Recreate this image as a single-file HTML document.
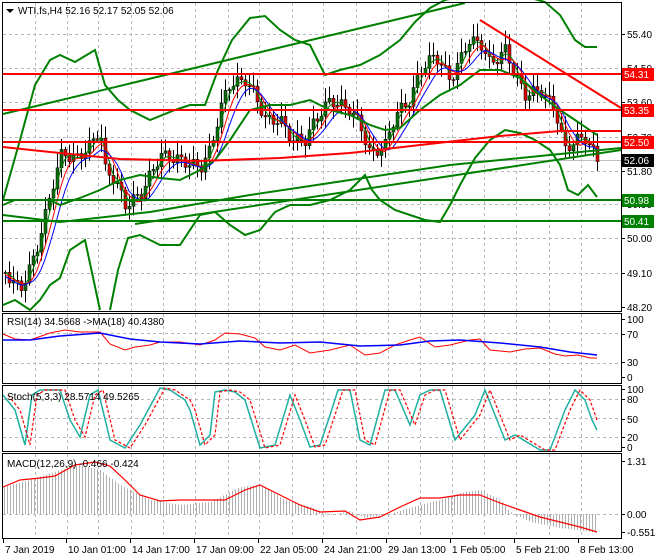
<!DOCTYPE html>
<html><head><meta charset="utf-8"><style>
body{margin:0;background:#fff;width:660px;height:560px;overflow:hidden}
svg{display:block;font-family:"Liberation Sans",sans-serif}
</style></head><body>
<svg id="s" width="660" height="560" xmlns="http://www.w3.org/2000/svg">
<rect width="660" height="560" fill="#fff"/>
<g id="grid" stroke="#b8b8b8" stroke-dasharray="3,3" stroke-width="1"></g>
<g id="hl"></g>
<g id="cd"></g>
<g id="ln" fill="none"></g>
<g stroke="#000" fill="none" stroke-width="1">
<rect x="2.5" y="2.5" width="619" height="309"/>
<rect x="2.5" y="313.5" width="619" height="70"/>
<rect x="2.5" y="385.5" width="619" height="66"/>
<rect x="2.5" y="453.5" width="619" height="85"/>
</g>
<g id="ax" font-size="10" fill="#000"></g>
<g font-size="10" fill="#000">
<path d="M6 9 L14 9 L10 13Z" fill="#000"/>
<text x="18" y="14">WTI.fs,H4  52.16 52.17 52.05 52.06</text>
<text x="7" y="325">RSI(14) 34.5668  -&gt;MA(18) 40.4380</text>
<text x="7" y="400">Stoch(5,3,3) 28.5714 49.5265</text>
<text x="7" y="467">MACD(12,26,9) -0.466 -0.424</text>
</g>
</svg>
<script>
var NS="http://www.w3.org/2000/svg";
function el(p,t,a,txt){var e=document.createElementNS(NS,t);for(var k in a)e.setAttribute(k,a[k]);if(txt!=null)e.textContent=txt;document.getElementById(p).appendChild(e);return e;}
function interp(pts,x){for(var i=0;i<pts.length-1;i++){if(x>=pts[i][0]&&x<=pts[i+1][0]){var t=(x-pts[i][0])/(pts[i+1][0]-pts[i][0]);return pts[i][1]+t*(pts[i+1][1]-pts[i][1]);}}return x<pts[0][0]?pts[0][1]:pts[pts.length-1][1];}
function pl(p,pts,c,w,extra){var a={points:pts.map(function(q){return q.join(",")}).join(" "),stroke:c,"stroke-width":w,fill:"none"};for(var k in extra)a[k]=extra[k];el(p,"polyline",a);}
var vx=[35,67,98,131,163,195,228,259,292,323,356,388,420,452,484,516,549,581];
vx.forEach(function(x){[[3,311],[314,383],[386,451],[454,538]].forEach(function(r){el("grid","line",{x1:x+.5,x2:x+.5,y1:r[0],y2:r[1]});});});
[34,68,102,137,171,204,238,273].forEach(function(y){el("grid","line",{x1:3,x2:621,y1:y+.5,y2:y+.5});});
[333,363].forEach(function(y){el("grid","line",{x1:3,x2:621,y1:y+.5,y2:y+.5});});
[399,418,437].forEach(function(y){el("grid","line",{x1:3,x2:621,y1:y+.5,y2:y+.5});});
el("grid","line",{x1:3,x2:621,y1:514.5,y2:514.5});
el("hl","line",{x1:3,x2:621,y1:160.5,y2:160.5,stroke:"#c0c0c0","stroke-dasharray":"none"});
var P=[[3,270],[20,290],[35,255],[45,215],[55,175],[62,152],[75,160],[90,145],[100,130],[105,170],[115,180],[125,205],[140,195],[150,175],[160,155],[180,160],[200,168],[210,150],[220,110],[228,85],[245,80],[255,95],[265,120],[280,120],[292,140],[305,140],[315,120],[330,100],[350,110],[360,125],[370,155],[385,145],[395,115],[410,100],[420,70],[435,55],[450,80],[460,60],[468,40],[482,45],[490,65],[505,50],[515,75],[525,95],[540,90],[555,110],[565,150],[575,140],[585,138],[592,150],[597,160]];
var closes=[];
for(var x=5,i=0;x<=597;x+=4,i++){var c=interp(P,x);closes.push([x,c]);}
var prev=closes[0][1];
closes.forEach(function(q,i){var x=q[0],c=q[1]+Math.sin(i*1.7)*6;var o=prev;prev=c;var top=Math.min(o,c),bot=Math.max(o,c);var hi=top-2-Math.abs(Math.sin(i*2.3))*12,lo=bot+2+Math.abs(Math.cos(i*1.3))*10;
el("cd","line",{x1:x+.5,x2:x+.5,y1:hi,y2:lo,stroke:"#000"});
var bull=c<o;el("cd","rect",{x:x-1,y:top,width:3,height:Math.max(bot-top,1),fill:bull?"#0a6b0a":"#e00000",stroke:"#000","stroke-width":0.5});});
function sm(n,off){return closes.map(function(q,i){var s=0,k=0;for(var j=Math.max(0,i-n);j<=i;j++){s+=closes[j][1];k++;}return [q[0],s/k+off];});}
pl("ln",sm(2,0),"#008000",1);pl("ln",sm(4,2),"#ff0000",1);pl("ln",sm(6,4),"#0000ff",1);
pl("ln",[[3,200],[20,140],[35,85],[50,60],[60,55],[75,62],[95,50],[105,85],[118,100],[130,110],[150,120],[175,110],[190,105],[205,105],[218,70],[232,40],[250,18],[265,16],[280,30],[295,40],[310,45],[325,75],[340,70],[360,65],[380,55],[400,40],[415,22],[430,8],[445,0],[470,-5],[520,-5],[545,2],[560,15],[575,40],[585,47],[597,47]],"#008000",2);
pl("ln",[[3,305],[15,300],[30,310],[40,300],[50,285],[60,278],[70,250],[85,240],[100,310]],"#008000",2);
pl("ln",[[110,310],[118,270],[128,238],[140,235],[160,245],[180,245],[200,215],[215,212],[230,225],[245,235],[260,230],[275,212],[290,205],[310,205],[330,200],[350,190],[365,175],[372,190],[380,200],[395,210],[410,215],[425,220],[440,222],[450,205],[460,185],[475,158],[490,140],[505,130],[520,133],[535,140],[550,150],[560,165],[568,190],[578,195],[588,185],[597,197]],"#008000",2);
pl("ln",[[3,205],[15,200],[30,200],[50,200],[60,205],[80,198],[100,190],[120,180],[140,175],[160,178],[180,180],[200,170],[215,160],[230,140],[250,110],[270,105],[290,105],[310,100],[330,110],[350,115],[370,125],[385,130],[400,128],[420,110],[440,95],[460,85],[480,70],[500,70],[520,78],[540,95],[560,110],[575,120],[597,135]],"#008000",2);
el("ln","line",{x1:3,y1:114,x2:465,y2:3,stroke:"#008000","stroke-width":2});
el("ln","line",{x1:135,y1:224,x2:621,y2:150,stroke:"#008000","stroke-width":2});
pl("ln",[[3,215],[60,222],[150,212],[250,195],[350,180],[450,165],[550,155],[621,148]],"#008000",2);
el("ln","line",{x1:480,y1:20,x2:621,y2:108,stroke:"#ff0000","stroke-width":2});
pl("ln",[[3,147],[50,152],[120,159],[200,161],[280,158],[350,153],[420,145],[500,136],[560,131],[621,131]],"#ff0000",2);
[74,110,142].forEach(function(y){el("ln","line",{x1:3,x2:621,y1:y,y2:y,stroke:"#ff0000","stroke-width":2});});
[200,221].forEach(function(y){el("ln","line",{x1:3,x2:621,y1:y,y2:y,stroke:"#008000","stroke-width":2});});
pl("ln",[[3,334],[15,339],[30,340],[50,333],[65,330],[80,332],[100,332],[110,344],[125,350],[135,347],[150,345],[160,342],[180,342],[200,345],[215,340],[225,333],[240,334],[255,338],[265,347],[280,350],[295,345],[310,353],[330,350],[350,345],[365,355],[380,353],[395,345],[410,340],[420,337],[435,347],[450,345],[470,340],[480,339],[490,350],[510,352],[525,349],[540,348],[555,354],[565,356],[578,355],[590,358],[597,358]],"#ff0000",1);
pl("ln",[[3,340],[30,340],[60,336],[100,333],[130,339],[160,342],[200,344],[240,341],[280,343],[320,342],[360,346],[400,345],[430,341],[460,340],[500,343],[540,347],[570,352],[597,355]],"#0000ff",1.5);
var st=[[3,395],[15,410],[25,445],[32,395],[40,390],[60,390],[70,420],[80,437],[90,395],[98,390],[110,440],[125,448],[140,425],[160,388],[170,390],[185,400],[190,410],[200,445],[210,435],[215,392],[225,390],[235,392],[245,400],[260,448],[275,445],[290,395],[300,420],[310,447],[320,445],[330,415],[338,390],[350,390],[360,440],[370,445],[385,390],[395,390],[410,425],[420,395],[430,390],[440,390],[455,440],[475,415],[485,390],[495,415],[505,440],[515,435],[540,450],[550,450],[565,410],[575,390],[585,400],[592,420],[597,430]];
pl("ln",st,"#20b0a0",1.5);
pl("ln",st.map(function(q){return [q[0]+5,q[1]];}).filter(function(q){return q[0]<=597}),"#ff0000",1.2,{"stroke-dasharray":"3,2"});
var mh=[[3,487],[30,480],[60,470],[80,465],[100,470],[120,485],[150,500],[180,505],[210,502],[240,487],[260,485],[285,500],[310,507],[330,515],[350,511],[365,518],[390,514],[420,505],[440,500],[460,493],[480,490],[500,500],[510,512],[530,522],[560,528],[597,533]];
for(var x=4;x<=597;x+=3){var y=interp(mh,x);el("ln","line",{x1:x+.5,x2:x+.5,y1:514,y2:y,stroke:"#b0b0b0"});}
pl("ln",[[3,487],[20,480],[40,478],[55,476],[75,465],[95,462],[110,466],[125,480],[140,495],[160,501],[180,500],[200,500],[225,500],[245,490],[260,485],[280,495],[300,505],[320,512],[345,511],[360,520],[380,517],[400,507],[420,498],[440,498],[460,495],[480,495],[500,503],[520,510],[540,517],[560,522],[580,527],[597,532]],"#ff0000",1.2);
function lab(y,t){el("ax","line",{x1:621,x2:625,y1:y+.5,y2:y+.5,stroke:"#000"});el("ax","text",{x:627,y:y+4},t);}
[[34,"55.40"],[68,"54.50"],[102,"53.60"],[137,"52.70"],[171,"51.80"],[204,"50.90"],[238,"50.00"],[273,"49.10"],[307,"48.20"]].forEach(function(a){lab(a[0],a[1]);});
[[319,"100"],[334,"70"],[362,"30"],[377,"0"]].forEach(function(a){lab(a[0],a[1]);});
[[389,"100"],[399,"80"],[419,"50"],[437,"20"],[447,"0"]].forEach(function(a){lab(a[0],a[1]);});
[[461,"1.31"],[514,"0.00"],[532,"-0.551"]].forEach(function(a){lab(a[0],a[1]);});
function box(y,t,c){el("ax","rect",{x:622,y:y-6,width:32,height:13,fill:c});el("ax","text",{x:624,y:y+4,fill:"#fff"},t);}
box(74,"54.31","#ff0000");box(110,"53.35","#ff0000");box(142,"52.50","#ff0000");box(160,"52.06","#000");box(200,"50.98","#008000");box(221,"50.41","#008000");
[[3,"7 Jan 2019"],[66,"10 Jan 01:00"],[130,"14 Jan 17:00"],[194,"17 Jan 09:00"],[258,"22 Jan 05:00"],[322,"24 Jan 21:00"],[386,"29 Jan 13:00"],[450,"1 Feb 05:00"],[514,"5 Feb 21:00"],[578,"8 Feb 13:00"]].forEach(function(a){el("ax","line",{x1:a[0]+.5,x2:a[0]+.5,y1:539,y2:543,stroke:"#000"});el("ax","text",{x:a[0]+2,y:553},a[1]);});
</script>
</body></html>
